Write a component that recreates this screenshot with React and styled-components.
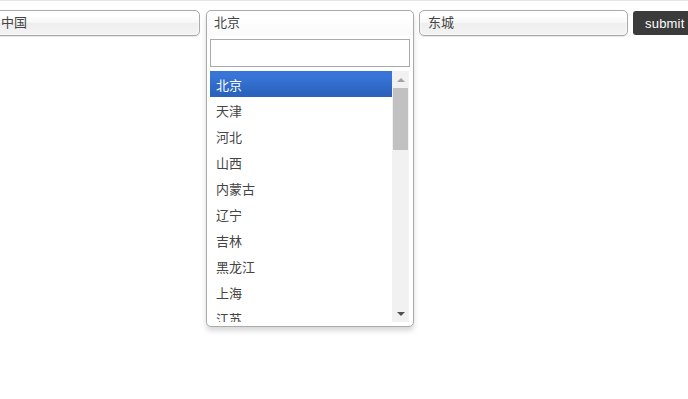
import styled, { createGlobalStyle } from "styled-components";

const GlobalStyle = createGlobalStyle`
    html, body {
        margin: 0;
        padding: 0;
        overflow: hidden;
        background: #fff;
    }
    body {
        font-family: "Liberation Sans", "Noto Sans CJK SC", sans-serif;
        font-size: 13px;
        color: #444;
    }
`;

const Page = styled.div`
    border-top: 1px solid #e6e6e6;
    height: 398px;
`;

const Row = styled.div`
    display: flex;
    align-items: flex-start;
    gap: 5px;
    margin-left: -8px;
    margin-top: 9px;
    width: 720px;
`;

const Select = styled.div`
    width: ${(p) => p.w || 208}px;
    box-sizing: border-box;
    height: 26px;
    line-height: 24px;
    padding-left: 8px;
    margin-right: ${(p) => p.mr || 0}px;
    border: 1px solid #aaa;
    border-radius: 5px;
    background: linear-gradient(#fff 20%, #f6f6f6 50%, #eee 52%, #f4f4f4 100%);
    box-shadow: 0 0 3px #fff inset, 0 1px 1px rgba(0, 0, 0, 0.1);
    flex-shrink: 0;
`;

const Drop = styled.div`
    width: 208px;
    box-sizing: border-box;
    border: 1px solid #aaa;
    border-radius: 5px;
    background: #fff;
    box-shadow: 0 4px 5px rgba(0, 0, 0, 0.15);
    flex-shrink: 0;
    padding-bottom: 4px;
`;

const DropHead = styled.div`
    height: 25px;
    line-height: 24px;
    padding-left: 7px;
    background: linear-gradient(#fff 20%, #fafafa 100%);
    border-radius: 5px 5px 0 0;
`;

const SearchWrap = styled.div`
    padding: 3px 3px 4px 3px;
`;

const Search = styled.input`
    display: block;
    width: 100%;
    box-sizing: border-box;
    height: 28px;
    margin: 0;
    border: 1px solid #aaa;
    outline: none;
    padding: 0 5px;
    font: inherit;
`;

const ListBox = styled.div`
    display: flex;
    margin: 0 4px 0 3px;
    height: 251px;
`;

const List = styled.ul`
    list-style: none;
    margin: 0;
    padding: 0;
    flex: 1;
    overflow: hidden;
`;

const Item = styled.li`
    height: 26px;
    box-sizing: border-box;
    padding: 4px 0 0 6px;
    line-height: 22px;
    color: ${(p) => (p.active ? "#fff" : "#444")};
    background: ${(p) => (p.active ? "linear-gradient(#3875d7 20%, #2a62bc 90%)" : "transparent")};
`;

const ScrollBar = styled.div`
    width: 17px;
    display: flex;
    flex-direction: column;
    background: #f1f1f1;
`;

const ScrollBtn = styled.div`
    height: 17px;
    display: flex;
    align-items: center;
    justify-content: center;
`;

const Arrow = styled.span`
    width: 0;
    height: 0;
    border-left: 4px solid transparent;
    border-right: 4px solid transparent;
    ${(p) =>
        p.down
            ? "border-top: 4px solid #505050;"
            : "border-bottom: 4px solid #a3a3a3;"}
`;

const Track = styled.div`
    flex: 1;
    padding: 0 1px;
`;

const Thumb = styled.div`
    height: 62px;
    background: #c1c1c1;
`;

const Submit = styled.button`
    flex-shrink: 0;
    margin-top: 1px;
    height: 24px;
    padding: 0 12px;
    border: none;
    border-radius: 3px;
    background: #3b3b3b;
    color: #fff;
    font-family: "Liberation Sans", sans-serif;
    font-size: 13px;
    font-weight: normal;
    letter-spacing: 0.2px;
`;

const provinces = [
    "北京", "天津", "河北", "山西", "内蒙古", "辽宁", "吉林", "黑龙江", "上海", "江苏",
    "浙江", "安徽", "福建", "江西", "山东", "河南", "湖北", "湖南", "广东", "广西",
    "海南", "重庆", "四川", "贵州", "云南", "西藏", "陕西", "甘肃", "青海", "宁夏",
    "新疆", "台湾", "香港", "澳门",
];

function App() {
    return (
        <Page>
            <GlobalStyle />
            <Row>
                <Select mr={1}>中国</Select>
                <Drop>
                    <DropHead>北京</DropHead>
                    <SearchWrap>
                        <Search type="text" />
                    </SearchWrap>
                    <ListBox>
                        <List>
                            {provinces.map((p, i) => (
                                <Item key={p} active={i === 0}>{p}</Item>
                            ))}
                        </List>
                        <ScrollBar>
                            <ScrollBtn><Arrow /></ScrollBtn>
                            <Track><Thumb /></Track>
                            <ScrollBtn><Arrow down /></ScrollBtn>
                        </ScrollBar>
                    </ListBox>
                </Drop>
                <Select w={209}>东城</Select>
                <Submit>submit</Submit>
            </Row>
        </Page>
    );
}

export default App;
